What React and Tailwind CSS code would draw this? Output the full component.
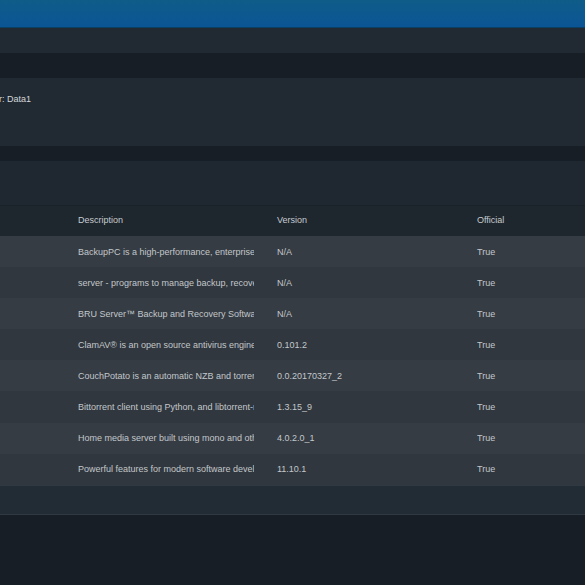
import React from 'react';

const rows = [
  { desc: 'BackupPC is a high-performance, enterprise-grade system for backing up', version: 'N/A', official: 'True' },
  { desc: 'server - programs to manage backup, recovery, and verification', version: 'N/A', official: 'True' },
  { desc: 'BRU Server™ Backup and Recovery Software', version: 'N/A', official: 'True' },
  { desc: 'ClamAV® is an open source antivirus engine for detecting trojans', version: '0.101.2', official: 'True' },
  { desc: 'CouchPotato is an automatic NZB and torrent downloader', version: '0.0.20170327_2', official: 'True' },
  { desc: 'Bittorrent client using Python, and libtorrent-rasterbar', version: '1.3.15_9', official: 'True' },
  { desc: 'Home media server built using mono and other free software', version: '4.0.2.0_1', official: 'True' },
  { desc: 'Powerful features for modern software developers', version: '11.10.1', official: 'True' },
];

function Row({ desc, version, official, className }) {
  return (
    <div className={`flex items-center h-[31.1px] pt-[2px] ${className}`}>
      <div className="w-[78px] shrink-0" />
      <div className="w-[176px] shrink-0 overflow-hidden whitespace-nowrap">{desc}</div>
      <div className="w-[23px] shrink-0" />
      <div className="w-[200px] shrink-0">{version}</div>
      <div>{official}</div>
    </div>
  );
}

export default function App() {
  return (
    <div className="w-[585px] h-[585px] overflow-hidden bg-[#171e26] text-[9px] text-[#c3c7cb] font-['Liberation_Sans',Arial,sans-serif]">
      <div className="h-[28px] bg-gradient-to-b from-[#0f5c88] to-[#0c5596] border-b border-[#0a3f66]" />
      <div className="h-[25px] bg-[#212a33]" />
      <div className="h-[25px] bg-[#171e26]" />

      <div className="h-[68px] bg-[#212a33] pt-[15px] text-[#d3d7db]">
        <div className="-ml-[1px]">r: Data1</div>
      </div>

      <div className="h-[15px] bg-[#171e26]" />

      <div className="bg-[#212a33]">
        <div className="h-[44px] bg-[#1f2830]" />
        <div className="h-[31px] flex items-center bg-[#1e272e] border-t border-[#1a2229] text-[#c7cbcf]">
          <div className="w-[78px] shrink-0" />
          <div className="w-[199px] shrink-0">Description</div>
          <div className="w-[200px] shrink-0">Version</div>
          <div>Official</div>
        </div>
        {rows.map((r, i) => (
          <Row key={i} {...r} className={i % 2 === 0 ? 'bg-[#353c43]' : 'bg-[#30373e]'} />
        ))}
        <div className="h-[30px] bg-[#212c35] border-t border-[#2a343c] border-b border-[#2e3942]" />
      </div>
    </div>
  );
}
